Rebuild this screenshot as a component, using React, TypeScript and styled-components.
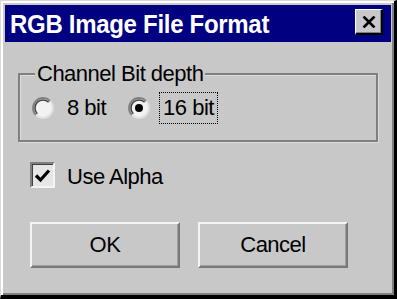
import React, { useState } from 'react';
import styled, { createGlobalStyle } from 'styled-components';

const GlobalStyle = createGlobalStyle`
  html, body {
    margin: 0;
    padding: 0;
    background: #c8c8c8;
  }
  body {
    width: 397px;
    height: 299px;
    overflow: hidden;
    font-family: "Liberation Sans", Arial, sans-serif;
  }
`;

const Window = styled.div`
  box-sizing: border-box;
  width: 397px;
  height: 299px;
  background: #c8c8c8;
  border-style: solid;
  border-width: 1px 3px 4px 1px;
  border-color: #d8d8d8 #000 #000 #d8d8d8;
  box-shadow: inset 2px 2px 0 #fff, inset -2px -2px 0 #808080;
  padding: 4px 3px 0 4px;
  display: flex;
  flex-direction: column;
`;

const TitleBar = styled.div`
  height: 37px;
  background: #000080;
  display: flex;
  align-items: center;
  justify-content: space-between;
  padding-left: 5px;
`;

const Title = styled.span`
  color: #fff;
  font-weight: bold;
  font-size: 24px;
  line-height: 28px;
  letter-spacing: -0.3px;
  transform: scaleY(1.08);
`;

const CloseButton = styled.div`
  box-sizing: border-box;
  width: 28px;
  height: 26px;
  align-self: flex-start;
  margin: 4px 8px 0 0;
  background: #c8c8c8;
  border-style: solid;
  border-width: 1px 2px 2px 1px;
  border-color: #fff #000 #000 #fff;
  box-shadow: inset -1px -1px 0 #808080;
  display: flex;
  align-items: center;
  justify-content: center;
`;

const Body = styled.div`
  padding: 20px 13px 0 13px;
  display: flex;
  flex-direction: column;
`;

const Group = styled.fieldset`
  margin: 0;
  padding: 6px 12px 16px 12px;
  border: 2px solid #808080;
  box-shadow: 1px 1px 0 #dcdcdc, inset 1px 1px 0 #dcdcdc;
`;

const Legend = styled.legend`
  padding: 0 2px;
  margin-left: 3px;
  background: #c8c8c8;
  font-size: 22px;
  line-height: 24px;
  letter-spacing: -0.5px;
  color: #000;
`;

const RadioRow = styled.div`
  display: flex;
  align-items: center;
  gap: 18px;
`;

const RadioItem = styled.label`
  display: flex;
  align-items: center;
  gap: 9px;
`;

const Text = styled.span<{ $focused?: boolean }>`
  display: block;
  padding: 3px 3px;
  border: 1px dotted ${p => (p.$focused ? '#000' : 'transparent')};
  font-size: 22px;
  line-height: 24px;
  letter-spacing: -0.5px;
  color: #000;
`;

const CheckRow = styled.label`
  display: flex;
  align-items: flex-start;
  gap: 12px;
  margin: 20px 0 0 12px;
`;

const CheckBox = styled.div`
  box-sizing: border-box;
  width: 25px;
  height: 26px;
  background: #e6e6e6;
  border-style: solid;
  border-width: 2px;
  border-color: #808080 #f4f4f4 #f4f4f4 #808080;
  box-shadow: inset 1px 1px 0 #404040;
  display: flex;
  align-items: center;
  justify-content: center;
`;

const CheckText = styled.span`
  margin-top: 3px;
  font-size: 22px;
  line-height: 24px;
  letter-spacing: -0.5px;
  color: #000;
`;

const ButtonRow = styled.div`
  display: flex;
  gap: 18px;
  margin: 33px 0 0 12px;
`;

const Button = styled.button`
  box-sizing: border-box;
  width: 150px;
  height: 46px;
  padding: 0;
  background: #c8c8c8;
  border-style: solid;
  border-width: 2px;
  border-color: #f4f4f4 #787878 #787878 #f4f4f4;
  box-shadow: inset -1px -1px 0 #a0a0a0;
  font-family: "Liberation Sans", Arial, sans-serif;
  font-size: 22px;
  line-height: 24px;
  letter-spacing: -0.5px;
  color: #000;
  cursor: pointer;
`;

const Radio = ({ checked }: { checked: boolean }) => (
  <svg width="22" height="22" viewBox="0 0 22 22">
    <circle cx="11" cy="11" r="10" fill="#f2f2f2" />
    <path d="M3.93 18.07 A10 10 0 0 1 18.07 3.93" fill="none" stroke="#808080" strokeWidth="2" />
    <path d="M5.34 16.66 A8 8 0 0 1 16.66 5.34" fill="none" stroke="#404040" strokeWidth="1.5" />
    <path d="M18.07 3.93 A10 10 0 0 1 3.93 18.07" fill="none" stroke="#e0e0e0" strokeWidth="2" />
    {checked && <circle cx="11" cy="11" r="4" fill="#000" />}
  </svg>
);

const App: React.FC = () => {
  const [depth, setDepth] = useState<number>(16);
  const [alpha, setAlpha] = useState<boolean>(true);

  return (
    <>
      <GlobalStyle />
      <Window>
        <TitleBar>
          <Title>RGB Image File Format</Title>
          <CloseButton>
            <svg width="14" height="12" viewBox="0 0 14 12">
              <path d="M1.5 0.5 L12.5 11.5 M12.5 0.5 L1.5 11.5" stroke="#000" strokeWidth="2.6" />
            </svg>
          </CloseButton>
        </TitleBar>
        <Body>
          <Group>
            <Legend>Channel Bit depth</Legend>
            <RadioRow>
              <RadioItem onClick={() => setDepth(8)}>
                <Radio checked={depth === 8} />
                <Text $focused={depth === 8}>8 bit</Text>
              </RadioItem>
              <RadioItem onClick={() => setDepth(16)}>
                <Radio checked={depth === 16} />
                <Text $focused={depth === 16}>16 bit</Text>
              </RadioItem>
            </RadioRow>
          </Group>
          <CheckRow onClick={() => setAlpha(!alpha)}>
            <CheckBox>
              {alpha && (
                <svg width="17" height="15" viewBox="0 0 17 15">
                  <path d="M2 7.5 L6.5 12 L15 2.5" fill="none" stroke="#000" strokeWidth="3.2" />
                </svg>
              )}
            </CheckBox>
            <CheckText>Use Alpha</CheckText>
          </CheckRow>
          <ButtonRow>
            <Button>OK</Button>
            <Button>Cancel</Button>
          </ButtonRow>
        </Body>
      </Window>
    </>
  );
};

export default App;
